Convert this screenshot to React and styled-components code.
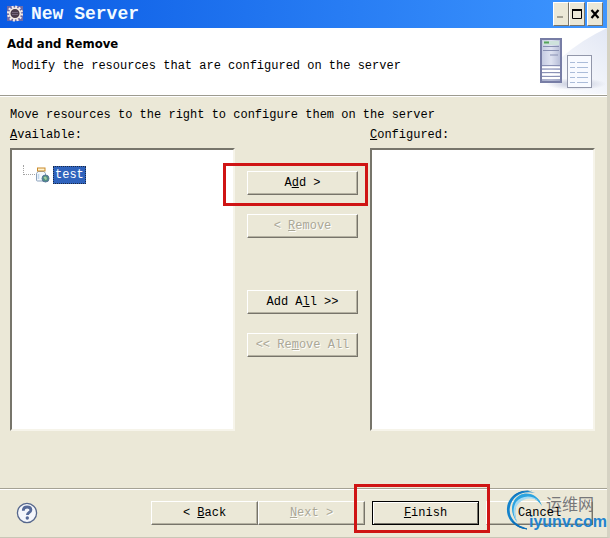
import React, { useState } from "react";
import styled, { createGlobalStyle, css } from "styled-components";

const App = () => {
  const [selected, setSelected] = useState("test");

  return (
    <>
      <GlobalStyle />
      <Window>
        <TitleBar>
          <GearIcon />
          <Title>New Server</Title>
          <Caption>
            <CaptionButton aria-label="Minimize">
              <svg width="12" height="12" viewBox="0 0 12 12">
                <path d="M2 9h6" stroke="#a5a294" strokeWidth="2" />
              </svg>
            </CaptionButton>
            <CaptionButton aria-label="Maximize">
              <svg width="12" height="12" viewBox="0 0 12 12">
                <path d="M1.5 2v8.5h9V2" stroke="#000" fill="none" />
                <path d="M1 2h10" stroke="#000" strokeWidth="2" />
              </svg>
            </CaptionButton>
            <CaptionButton aria-label="Close" $gap>
              <svg width="12" height="12" viewBox="0 0 12 12">
                <path d="M2.5 2l7 8M9.5 2l-7 8" stroke="#000" strokeWidth="2.2" />
              </svg>
            </CaptionButton>
          </Caption>
        </TitleBar>

        <Header>
          <HeaderText>
            <Heading>Add and Remove</Heading>
            <SubText>Modify the resources that are configured on the server</SubText>
          </HeaderText>
          <ServerArt />
        </Header>

        <Content>
          <Message>Move resources to the right to configure them on the server</Message>
          <Columns>
            <Column>
              <ListLabel id="available">
                <u>A</u>vailable:
              </ListLabel>
              <ListBox role="tree" aria-labelledby="available">
                <TreeRow>
                  <TreeLine />
                  <JarIcon />
                  <TreeItem
                    role="treeitem"
                    $selected={selected === "test"}
                    onClick={() => setSelected("test")}
                  >
                    test
                  </TreeItem>
                </TreeRow>
              </ListBox>
            </Column>
            <Actions>
              <Button>
                A<u>d</u>d &gt;
                <Highlight $top={-9} $right={-11} $bottom={-12} $left={-25} />
              </Button>
              <Button disabled>
                &lt; <u>R</u>emove
              </Button>
              <Spacer />
              <Button>
                Add A<u>l</u>l &gt;&gt;
              </Button>
              <Button disabled>
                &lt;&lt; Re<u>m</u>ove All
              </Button>
            </Actions>
            <Column>
              <ListLabel id="configured">
                <u>C</u>onfigured:
              </ListLabel>
              <ListBox role="tree" aria-labelledby="configured" />
            </Column>
          </Columns>
        </Content>

        <Footer>
          <HelpButton aria-label="Help">
            <HelpIcon />
          </HelpButton>
          <Wizard>
            <Button>
              &lt; <u>B</u>ack
            </Button>
            <Button disabled>
              <u>N</u>ext &gt;
            </Button>
          </Wizard>
          <Wizard $raised>
            <Button $primary>
              <u>F</u>inish
              <Highlight $top={-18} $right={-12} $bottom={-9} $left={-19} />
            </Button>
          </Wizard>
          <Wizard>
            <Button $flat>
              <ButtonLabel>Cancel</ButtonLabel>
            </Button>
            <Watermark>
              <Swirl />
              <MarkText>
                <MarkName>运维网</MarkName>
                <MarkSite>iyunv.com</MarkSite>
              </MarkText>
            </Watermark>
          </Wizard>
        </Footer>
      </Window>
    </>
  );
};

export default App;

const GearIcon = () => (
  <svg width="18" height="18" viewBox="0 0 18 18">
    <rect x="1" y="1" width="16" height="15" fill="#6d6aa8" />
    <circle cx="9" cy="8.5" r="6.8" fill="none" stroke="#f4ece6" strokeWidth="2.4" strokeDasharray="2 1.56" />
    <circle cx="9" cy="8.5" r="5.3" fill="#4a3b4c" stroke="#f4ece6" strokeWidth="1.5" />
    <path d="M6 7.5h6M6 9.5h6" stroke="#74667c" />
  </svg>
);

const JarIcon = () => (
  <svg width="15" height="16" viewBox="0 0 15 16">
    <path d="M3 4.5h6l1.5 2V13q0 1-1 1h-7q-1 0-1-1V6.5z" fill="#f3f8fd" stroke="#8ca3bd" />
    <rect x="2.5" y="1" width="7.5" height="3" fill="#fff3d0" stroke="#c98a2b" />
    <path d="M3.5 7v5" stroke="#c3d8ec" strokeWidth="1.5" />
    <circle cx="10.5" cy="11.5" r="3.5" fill="#4f8f83" stroke="#58739b" />
    <path d="M8.5 10.5q2-2 3 0t-1 2.5" fill="#a4cba0" />
  </svg>
);

const HelpIcon = () => (
  <svg width="22" height="22" viewBox="0 0 22 22">
    <circle cx="11" cy="11" r="9.6" fill="#f4f6fb" stroke="#56678c" strokeWidth="1.3" />
    <path d="M7.3 8.8q0-3.8 3.8-3.8t3.8 3q0 1.5-1.8 2.5-1.7 1-1.7 2.6" fill="none" stroke="#566a98" strokeWidth="2.8" />
    <circle cx="11.3" cy="16" r="1.7" fill="#566a98" />
  </svg>
);

const ServerArt = () => (
  <svg width="75" height="66" viewBox="0 0 75 66">
    <defs>
      <linearGradient id="beam" x1="0" y1="1" x2="1" y2="0">
        <stop offset="0.1" stopColor="#fff" />
        <stop offset="1" stopColor="#e2e7f4" />
      </linearGradient>
      <linearGradient id="tower" x1="0" y1="0" x2="1" y2="0">
        <stop offset="0" stopColor="#c3c9e0" />
        <stop offset="0.5" stopColor="#dfe3f1" />
        <stop offset="1" stopColor="#b4bbd6" />
      </linearGradient>
      <radialGradient id="shade">
        <stop offset="0.3" stopColor="#cfd3e2" />
        <stop offset="1" stopColor="#cfd3e2" stopOpacity="0" />
      </radialGradient>
    </defs>
    <path d="M0 66Q24 24 75 0V66z" fill="url(#beam)" />
    <ellipse cx="44" cy="56" rx="30" ry="6" fill="url(#shade)" />
    <rect x="9" y="11" width="20" height="43" fill="url(#tower)" stroke="#777da5" strokeWidth="2" />
    <rect x="11" y="13" width="16" height="4" fill="#cee2dc" />
    <path d="M12 14.5h5" stroke="#55a35b" strokeWidth="2" />
    <path d="M11 18.5h16M11 22.5h16M18 27h8" stroke="#8890b2" />
    <path d="M10 39.5h18M10 43h18M10 46.5h18M10 50h18" stroke="#fff" strokeWidth="2" />
    <path d="M10 37.5h18M10 41h18M10 44.5h18M10 48.5h18M10 52h18" stroke="#8a91b5" />
    <rect x="35.5" y="27.5" width="24" height="32" fill="#f8faff" stroke="#9297aa" />
    <path d="M38 34.5h5M45 34.5h11M38 39.5h5M45 39.5h11M38 44.5h5M45 44.5h11M38 49.5h5M45 49.5h11M38 54.5h5M45 54.5h11" stroke="#abbcd9" />
  </svg>
);

const Swirl = () => (
  <svg width="38" height="40" viewBox="0 0 38 40">
    <path d="M29 3C16-3 2 5 1 18c-1 11 7 19 18 21C9 34 2 27 4 17 6 6 17 0 29 3z" fill="#1583cb" />
    <path d="M36 16C33 5 22 1 14 5 5 10 3 22 11 32 8 24 8 14 15 9 22 5 31 8 36 16z" fill="#2ba3df" />
    <path d="M33 11C25 4 15 6 10 12c-4 7-3 15 2 21-4-7-4-15 1-20 5-5 13-6 20-2z" fill="#a4daf3" />
    <path d="M27 1C18-1 9 2 5 9 11 3 19 0 27 1z" fill="#0b6db8" />
    <path d="M6 31q5 7 15 8-8-2-15-8z" fill="#0b6db8" stroke="#0b6db8" />
  </svg>
);

const GlobalStyle = createGlobalStyle`
  * {
    box-sizing: border-box;
  }
  body {
    margin: 0;
    background: #ebe8d7;
    color: #000;
    font-family: "Liberation Mono", "Noto Sans CJK SC", monospace;
    font-size: 12px;
    line-height: 16px;
  }
`;

const Window = styled.div`
  display: flex;
  flex-direction: column;
  min-height: 100vh;
  overflow: hidden;
  border-right: 3px solid #d5d2c3;
  border-bottom: 1px solid #c9c6b6;
`;

const TitleBar = styled.div`
  display: flex;
  align-items: center;
  height: 28px;
  padding: 0 4px 0 6px;
  gap: 7px;
  background: linear-gradient(90deg, #0a5be4, #3e96ff);
`;

const Title = styled.div`
  flex: 1;
  color: #f2fbff;
  font-size: 18px;
  font-weight: 700;
`;

const Caption = styled.div`
  display: flex;
`;

const CaptionButton = styled.button`
  display: flex;
  align-items: center;
  justify-content: center;
  width: 16px;
  height: 24px;
  padding: 0;
  margin-left: ${({ $gap }) => ($gap ? "2px" : "0")};
  background: #ebe8d7;
  border: 1px solid;
  border-color: #fff #77746a #77746a #fff;
`;

const Header = styled.div`
  display: flex;
  justify-content: space-between;
  height: 68px;
  background: #fff;
  border-bottom: 1px solid #9d9b90;
`;

const HeaderText = styled.div`
  padding: 8px 0 0 7px;
`;

const Heading = styled.h1`
  margin: 0;
  font-family: "DejaVu Sans Condensed", "DejaVu Sans", sans-serif;
  font-size: 13px;
  font-weight: 700;
  line-height: 16px;
`;

const SubText = styled.p`
  margin: 6px 0 0 5px;
`;

const Content = styled.div`
  display: flex;
  flex: 1;
  flex-direction: column;
  padding: 10px 12px 57px 10px;
  border-top: 1px solid #fff;
`;

const Message = styled.p`
  margin: 0 0 4px;
`;

const Columns = styled.div`
  display: flex;
  flex: 1;
  gap: 12px;
`;

const Column = styled.div`
  display: flex;
  flex: 1;
  flex-direction: column;
`;

const ListLabel = styled.div`
  height: 21px;
`;

const ListBox = styled.div`
  flex: 1;
  min-height: 120px;
  padding: 15px 11px;
  background: #fff;
  border: 2px solid;
  border-color: #77756b #f6f4ea #f6f4ea #77756b;
`;

const TreeRow = styled.div`
  display: flex;
  align-items: center;
`;

const TreeLine = styled.span`
  width: 12px;
  height: 10px;
  margin-bottom: 9px;
  border: 1px dotted #a3a3a3;
  border-width: 0 0 1px 1px;
`;

const TreeItem = styled.span`
  margin-left: 3px;
  padding: 0 1px;
  border: 1px dotted transparent;
  ${({ $selected }) =>
    $selected &&
    css`
      background: #2f63bd;
      border-color: #1c2a45;
      color: #fff;
    `}
`;

const Actions = styled.div`
  display: flex;
  flex-direction: column;
  width: 111px;
  gap: 19px;
  padding-top: 44px;
`;

const Spacer = styled.div`
  height: 14px;
`;

const Button = styled.button`
  position: ${({ $flat }) => ($flat ? "static" : "relative")};
  width: 100%;
  height: 24px;
  padding: 0;
  background: #ebe8d7;
  border: 1px solid;
  border-color: #fff #77746a #77746a #fff;
  box-shadow: inset -1px -1px #b5b2a2;
  color: #000;
  font: inherit;
  white-space: pre;

  &:disabled {
    color: #aaa797;
    text-shadow: 1px 1px #fff;
  }

  ${({ $primary }) =>
    $primary &&
    css`
      border-color: #000;
      box-shadow: inset 1px 1px #fff, inset -1px -1px #77746a;
    `}
`;

const ButtonLabel = styled.span`
  position: relative;
  z-index: 1;
`;

const Highlight = styled.span`
  position: absolute;
  top: ${({ $top }) => $top}px;
  right: ${({ $right }) => $right}px;
  bottom: ${({ $bottom }) => $bottom}px;
  left: ${({ $left }) => $left}px;
  border: 3px solid #cf1414;
  pointer-events: none;
`;

const Footer = styled.div`
  display: flex;
  align-items: center;
  height: 49px;
  padding: 0 14px 0 16px;
  border-top: 1px solid #a5a294;
  box-shadow: inset 0 1px #fff;
`;

const HelpButton = styled.button`
  display: flex;
  margin-right: auto;
  padding: 0;
  border: 0;
  background: none;
`;

const Wizard = styled.div`
  position: relative;
  z-index: ${({ $raised }) => ($raised ? 1 : 0)};
  display: flex;
  margin-left: 7px;

  ${Button} {
    width: 107px;
  }
`;

const Watermark = styled.div`
  position: absolute;
  top: -11px;
  left: 20px;
  display: flex;
  pointer-events: none;
`;

const MarkText = styled.div`
  display: flex;
  flex-direction: column;
  margin: 4px 0 0 -15px;
`;

const MarkName = styled.span`
  padding-left: 17px;
  color: #77777a;
  font-family: "Noto Sans CJK SC", sans-serif;
  font-size: 16px;
  line-height: 18px;
`;

const MarkSite = styled.span`
  color: #2183cf;
  font-family: "Liberation Sans", sans-serif;
  font-size: 16px;
  font-weight: 700;
  line-height: 20px;
`;
